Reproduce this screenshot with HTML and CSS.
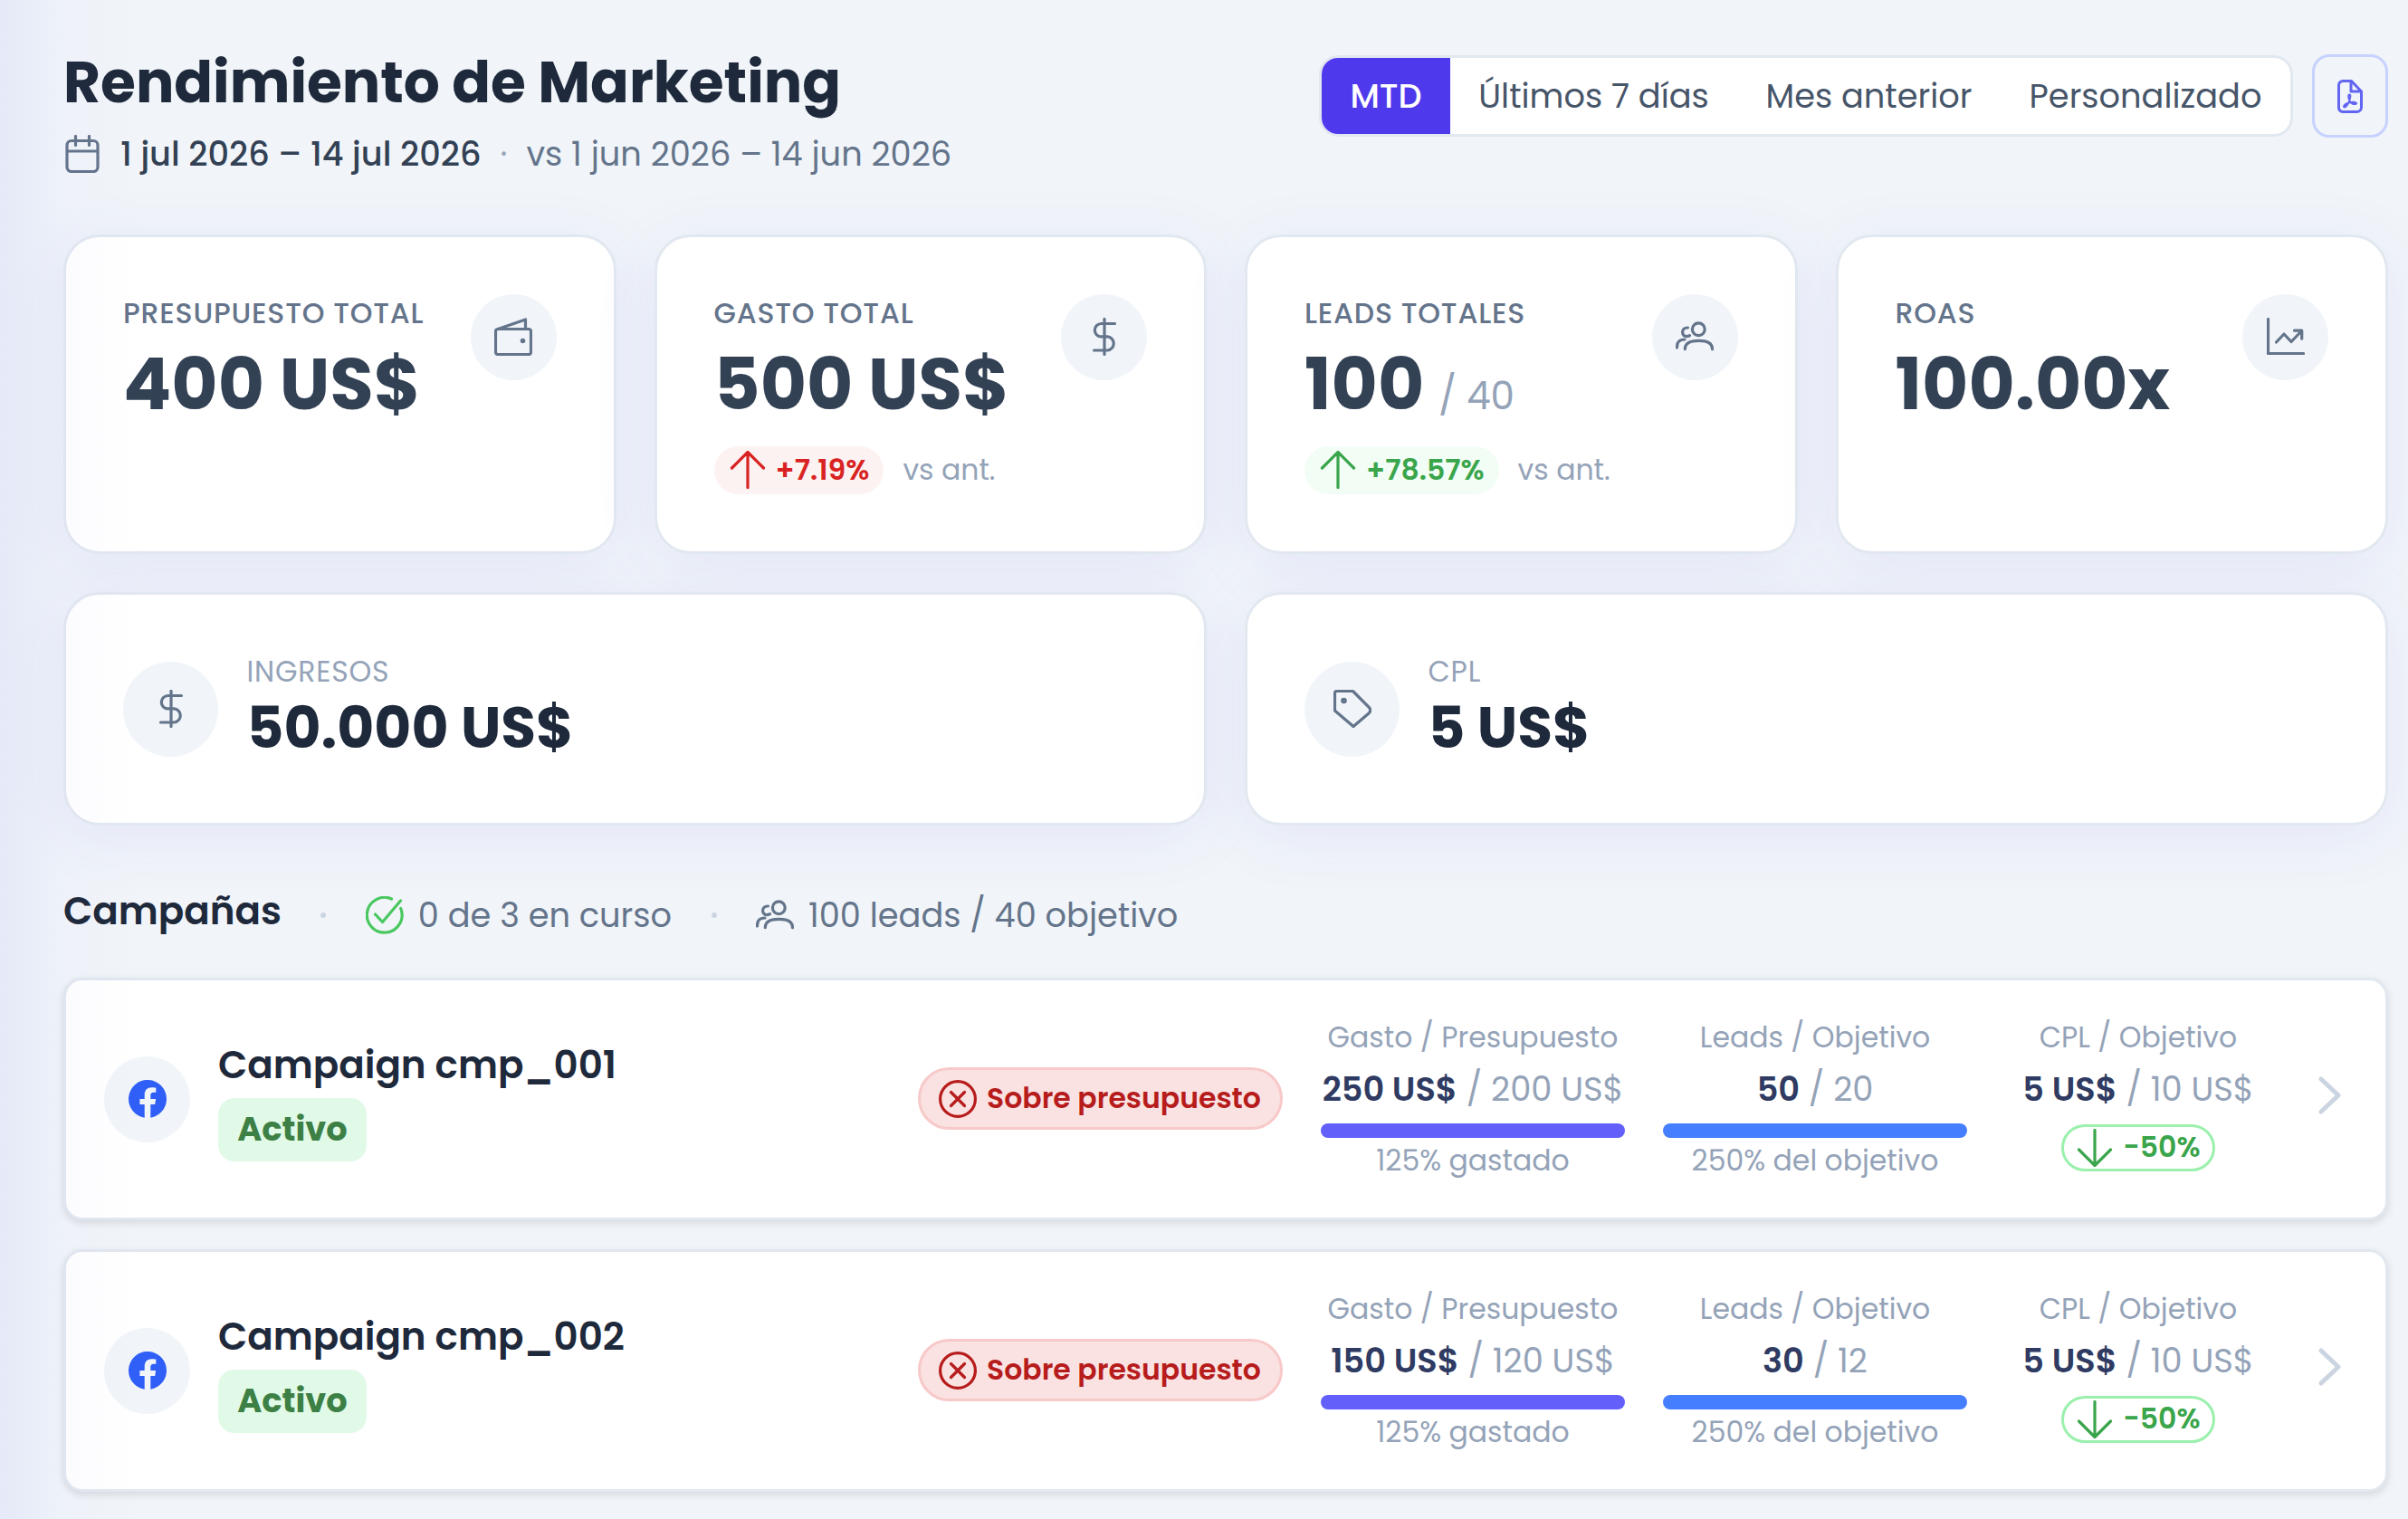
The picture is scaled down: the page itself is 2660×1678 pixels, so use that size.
FILE: index.html
```html
<!DOCTYPE html>
<html lang="es">
<head>
<meta charset="UTF-8">
<meta name="viewport" content="width=device-width, initial-scale=1.0">
<title>Rendimiento de Marketing</title>
<link rel="stylesheet" href="styles.css">
</head>
<body>
<!-- Icons -->
<svg class="sprite" aria-hidden="true">
    <symbol id="calendar" viewBox="0 0 42 42"><path d="M9 6.500h24a5 5 0 0 1 5 5v24a5 5 0 0 1-5 5H9a5 5 0 0 1-5-5v-24a5 5 0 0 1 5-5zM4 18h34M13.500 1.500v10M28.500 1.500v10"/></symbol>
    <symbol id="wallet" viewBox="0 0 42 42"><path d="M4 12.500h34a2.500 2.500 0 0 1 2.500 2.500v23a2.500 2.500 0 0 1-2.500 2.500H4A2.500 2.500 0 0 1 1.500 38V15A2.500 2.500 0 0 1 4 12.500zM4 12.500L34.500 2v10.500"/><circle class="dot-fill" cx="31.500" cy="25.500" r="2.800"/></symbol>
    <symbol id="dollar" viewBox="0 0 42 42"><path d="M21 1.400v39.200M32.500 6.500H17.500a7.200 7.200 0 0 0 0 14.400h7a7.600 7.600 0 0 1 0 15.100H9.500"/></symbol>
    <symbol id="users" viewBox="0 0 42 42"><circle cx="25.300" cy="12.700" r="6.900"/><path d="M10.300 34.700C10.300 27.500 17 25.400 25.500 25.400S40.500 27.500 40.500 34.700M1.500 33C1.300 27 4 24 10 24M13.500 11C6 10.500 5.800 20.500 12 20.700q2 0 3.500-1"/></symbol>
    <symbol id="chart" viewBox="0 0 42 42"><path d="M1.500 1.500v38h39M10.500 27l8.500-9 8 8.500L38.500 14.500M30.500 14.200h8.200v9"/></symbol>
    <symbol id="tag" viewBox="0 0 42 42"><path d="M3.500 1.500H21.500L39.300 19.300a4.500 4.500 0 0 1 0 6.400L22 40.500 1.500 23V3.500a2 2 0 0 1 2-2z"/><circle class="dot-fill" cx="11.500" cy="12" r="3.300"/></symbol>
    <symbol id="arrow-up" viewBox="0 0 42 42"><path d="M21 40.500V1.500M3.500 19L21 1.500 38.500 19"/></symbol>
    <symbol id="arrow-down" viewBox="0 0 42 42"><path d="M21 1.500v39M3.500 23L21 40.500 38.500 23"/></symbol>
    <symbol id="check" viewBox="0 0 42 42"><path d="M38.700 13.500A19.400 19.400 0 1 1 28.500 3M10.500 20l8 8.500L38.500 5"/></symbol>
    <symbol id="cross" viewBox="0 0 42 42"><circle cx="21" cy="21" r="19.400"/><path d="M13.500 13.500l15 15M28.500 13.500l-15 15"/></symbol>
    <symbol id="chevron" viewBox="0 0 42 42"><path d="M13 3l19 18-19 18"/></symbol>
    <symbol id="pdf" viewBox="0 0 28 37"><path d="M6 1.500h9.500L26.500 13v17.500a5 5 0 0 1-5 5H6a4.500 4.500 0 0 1-4.500-5V6A4.500 4.500 0 0 1 6 1.500zM15 2v11h11"/><path class="thin" d="M13.300 23c-1-2.500-1.800-6.500 0-6.500s1 4-.2 7c-1 2.800-3.500 7-5.300 7s-.5-3.500 4-4.800c3-1 7.500-1.200 9 0s-2 1.800-4.300.8-2.500-2-3.200-3.500z"/></symbol>
    <symbol id="facebook" viewBox="0 0 42 42"><path d="M42 21A21 21 0 1 0 17.700 41.700V27.100H12.400V21h5.300v-4.600c0-5.300 3.100-8.200 7.900-8.200 2.300 0 4.700.4 4.700.4v5.200h-2.600c-2.600 0-3.400 1.600-3.400 3.300V21h5.800l-.9 6.100h-4.900v14.600A21 21 0 0 0 42 21z"/></symbol>
</svg>

<div class="page">
    <header class="header">
        <div>
            <h1 class="title">Rendimiento de Marketing</h1>
            <div class="period">
                <svg class="icon"><use href="#calendar"/></svg>
                <span class="period-current">1 jul 2026 – 14 jul 2026</span>
                <span class="period-sep">·</span>
                <span class="period-previous">vs 1 jun 2026 – 14 jun 2026</span>
            </div>
        </div>
        <div class="toolbar">
            <div class="tabs">
                <button class="tab tab-active">MTD</button>
                <button class="tab tab-week">Últimos 7 días</button>
                <button class="tab tab-month">Mes anterior</button>
                <button class="tab tab-custom">Personalizado</button>
            </div>
            <button class="pdf-btn" aria-label="PDF"><svg><use href="#pdf"/></svg></button>
        </div>
    </header>

    <section class="kpis">
        <div class="card kpi">
            <div>
                <div class="kpi-label">PRESUPUESTO TOTAL</div>
                <div class="kpi-value">400 US$</div>
            </div>
            <div class="circle"><svg class="icon"><use href="#wallet"/></svg></div>
        </div>
        <div class="card kpi">
            <div>
                <div class="kpi-label">GASTO TOTAL</div>
                <div class="kpi-value">500 US$</div>
                <div class="trend">
                    <span class="trend-pill trend-bad"><svg class="icon"><use href="#arrow-up"/></svg>+7.19%</span>
                    <span class="trend-note">vs ant.</span>
                </div>
            </div>
            <div class="circle"><svg class="icon"><use href="#dollar"/></svg></div>
        </div>
        <div class="card kpi">
            <div>
                <div class="kpi-label">LEADS TOTALES</div>
                <div class="kpi-value">100 <span class="kpi-goal">/ 40</span></div>
                <div class="trend">
                    <span class="trend-pill trend-good"><svg class="icon"><use href="#arrow-up"/></svg>+78.57%</span>
                    <span class="trend-note">vs ant.</span>
                </div>
            </div>
            <div class="circle"><svg class="icon"><use href="#users"/></svg></div>
        </div>
        <div class="card kpi">
            <div>
                <div class="kpi-label">ROAS</div>
                <div class="kpi-value">100.00x</div>
            </div>
            <div class="circle"><svg class="icon"><use href="#chart"/></svg></div>
        </div>
    </section>

    <section class="totals">
        <div class="card total">
            <div class="circle circle-lg"><svg class="icon"><use href="#dollar"/></svg></div>
            <div class="total-text">
                <div class="total-label">INGRESOS</div>
                <div class="total-value">50.000 US$</div>
            </div>
        </div>
        <div class="card total">
            <div class="circle circle-lg"><svg class="icon"><use href="#tag"/></svg></div>
            <div class="total-text">
                <div class="total-label">CPL</div>
                <div class="total-value">5 US$</div>
            </div>
        </div>
    </section>

    <div class="section-head">
        <h2 class="section-title">Campañas</h2>
        <span class="bullet"></span>
        <span class="summary"><svg class="icon icon-ok"><use href="#check"/></svg>0 de 3 en curso</span>
        <span class="bullet"></span>
        <span class="summary"><svg class="icon"><use href="#users"/></svg>100 leads / 40 objetivo</span>
    </div>

    <section class="campaigns">
        <article class="campaign">
            <div class="circle"><svg class="icon-fb"><use href="#facebook"/></svg></div>
            <div class="campaign-info">
                <div class="campaign-name">Campaign cmp_001</div>
                <span class="status">Activo</span>
            </div>
            <span class="alert"><svg class="icon"><use href="#cross"/></svg>Sobre presupuesto</span>
            <div class="metric">
                <div class="metric-label">Gasto / Presupuesto</div>
                <div class="metric-value"><b>250 US$</b> / 200 US$</div>
                <div class="bar bar-spend"></div>
                <div class="metric-note">125% gastado</div>
            </div>
            <div class="metric">
                <div class="metric-label">Leads / Objetivo</div>
                <div class="metric-value"><b>50</b> / 20</div>
                <div class="bar bar-leads"></div>
                <div class="metric-note">250% del objetivo</div>
            </div>
            <div class="metric metric-cpl">
                <div class="metric-label">CPL / Objetivo</div>
                <div class="metric-value"><b>5 US$</b> / 10 US$</div>
                <span class="delta"><svg class="icon"><use href="#arrow-down"/></svg>-50%</span>
            </div>
            <svg class="icon chevron"><use href="#chevron"/></svg>
        </article>

        <article class="campaign">
            <div class="circle"><svg class="icon-fb"><use href="#facebook"/></svg></div>
            <div class="campaign-info">
                <div class="campaign-name">Campaign cmp_002</div>
                <span class="status">Activo</span>
            </div>
            <span class="alert"><svg class="icon"><use href="#cross"/></svg>Sobre presupuesto</span>
            <div class="metric">
                <div class="metric-label">Gasto / Presupuesto</div>
                <div class="metric-value"><b>150 US$</b> / 120 US$</div>
                <div class="bar bar-spend"></div>
                <div class="metric-note">125% gastado</div>
            </div>
            <div class="metric">
                <div class="metric-label">Leads / Objetivo</div>
                <div class="metric-value"><b>30</b> / 12</div>
                <div class="bar bar-leads"></div>
                <div class="metric-note">250% del objetivo</div>
            </div>
            <div class="metric metric-cpl">
                <div class="metric-label">CPL / Objetivo</div>
                <div class="metric-value"><b>5 US$</b> / 10 US$</div>
                <span class="delta"><svg class="icon"><use href="#arrow-down"/></svg>-50%</span>
            </div>
            <svg class="icon chevron"><use href="#chevron"/></svg>
        </article>
    </section>
</div>
</body>
</html>
```
FILE: styles.css
```css
* {
    box-sizing: border-box;
}

body {
    margin: 0;
    height: 100vh;
    overflow: hidden;
    background-color: #f1f5f9;
    color: #1e293b;
    font-family: Poppins, Inter, "Liberation Sans", sans-serif;
    font-size: 36.75px;
    white-space: nowrap;
}

body::after {
    content: "";
    position: absolute;
    top: 0;
    left: 0;
    width: 160px;
    height: 100%;
    background: linear-gradient(to right, rgba(99, 102, 241, 0.08), rgba(99, 102, 241, 0.02) 45%, rgba(99, 102, 241, 0));
    pointer-events: none;
}

h1, h2 {
    margin: 0;
}

button {
    font: inherit;
    border: none;
    padding: 0;
    background: none;
    cursor: pointer;
}

.sprite {
    display: none;
}

.icon {
    width: 42px;
    height: 42px;
    flex-shrink: 0;
    fill: none;
    stroke: currentColor;
    stroke-width: 3.2;
    stroke-linecap: round;
    stroke-linejoin: round;
}

.dot-fill {
    fill: currentColor;
    stroke: none;
}

.page {
    padding: 52px 22px 0 70px;
}

/* Header */
.header {
    display: flex;
    justify-content: space-between;
    align-items: flex-start;
    height: 207px;
}

.title {
    font-size: 63px;
    font-weight: 700;
    line-height: 78px;
}

.period {
    display: flex;
    align-items: center;
    height: 60px;
    margin-top: 10px;
    color: #64748b;
}

.period-current {
    margin-left: 21px;
    font-weight: 500;
    color: #334155;
}

.period-sep {
    width: 50px;
    text-align: center;
    color: #94a3b8;
}

.toolbar {
    display: flex;
    align-items: center;
    gap: 21px;
    margin-top: 8px;
}

.tabs {
    display: flex;
    height: 90px;
    border: 3px solid #e2e8f0;
    border-radius: 21px;
    background-color: #fff;
    overflow: hidden;
}

.tab {
    color: #475569;
}

.tab-active {
    width: 142px;
    background-color: #4f39ed;
    color: #fff;
    font-weight: 500;
}

.tab-week {
    width: 317px;
}

.tab-month {
    width: 291px;
}

.tab-custom {
    width: 320px;
}

.pdf-btn {
    display: flex;
    align-items: center;
    justify-content: center;
    width: 84px;
    height: 92px;
    border: 3px solid #c7d2fe;
    border-radius: 19px;
}

.pdf-btn svg {
    width: 28px;
    height: 37px;
    fill: none;
    stroke: #6366f1;
    stroke-width: 3;
    stroke-linejoin: round;
}

.thin {
    stroke-width: 2;
}

/* Cards */
.card {
    background-color: #fff;
    border: 3px solid #e2e8f0;
    border-radius: 40px;
    box-shadow: 0 12px 72px rgba(79, 70, 229, 0.08);
}

.circle {
    display: flex;
    align-items: center;
    justify-content: center;
    flex-shrink: 0;
    width: 95px;
    height: 95px;
    border-radius: 50%;
    background-color: #f1f5f9;
    color: #64748b;
}

.circle-lg {
    width: 105px;
    height: 105px;
}

.kpis {
    display: grid;
    grid-template-columns: repeat(4, 1fr);
    gap: 42px;
}

.kpi {
    display: flex;
    justify-content: space-between;
    height: 353px;
    padding: 63px;
}

.kpi .icon,
.total .icon {
    margin-bottom: 1px;
}

.kpi-label {
    font-size: 31.5px;
    font-weight: 500;
    line-height: 42px;
    letter-spacing: 0.8px;
    color: #64748b;
}

.kpi-value {
    height: 84px;
    margin-top: 16px;
    font-size: 78.75px;
    font-weight: 700;
    line-height: 84px;
    color: #334155;
}

.kpi-goal {
    margin-left: -1px;
    font-size: 42px;
    font-weight: 400;
    line-height: 1;
    color: #94a3b8;
}

.trend {
    display: flex;
    align-items: center;
    margin-top: 26px;
    font-size: 31.5px;
}

.trend-pill {
    display: flex;
    align-items: center;
    gap: 10px;
    height: 53px;
    padding: 0 16px;
    border-radius: 27px;
    font-weight: 600;
}

.trend-bad {
    background-color: #fdf2f2;
    color: #d92323;
}

.trend-good {
    background-color: #f2fdf5;
    color: #3aa54b;
}

.trend-note {
    margin-left: 21px;
    color: #94a3b8;
}

.totals {
    display: grid;
    grid-template-columns: repeat(2, 1fr);
    gap: 42px;
    margin-top: 42px;
}

.total {
    display: flex;
    align-items: center;
    height: 258px;
    padding: 0 63px;
}

.total-text {
    margin-left: 31.5px;
    padding-bottom: 1px;
}

.total-label {
    font-size: 31.5px;
    line-height: 42px;
    letter-spacing: 0.8px;
    color: #94a3b8;
}

.total-value {
    font-size: 63px;
    font-weight: 700;
    line-height: 82px;
}

/* Campaigns */
.section-head {
    display: flex;
    align-items: center;
    height: 60px;
    margin: 69px 0 39px;
    color: #64748b;
}

.section-title {
    padding-bottom: 10px;
    font-size: 42px;
    font-weight: 600;
    color: #1e293b;
}

.bullet {
    width: 6px;
    height: 6px;
    margin: 0 43.5px;
    border-radius: 50%;
    background-color: #cbd5e1;
}

.summary {
    display: flex;
    align-items: center;
    gap: 16px;
}

.icon-ok {
    color: #4ac760;
}

.campaigns {
    display: flex;
    flex-direction: column;
    gap: 32px;
}

.campaign {
    display: flex;
    align-items: center;
    gap: 42px;
    height: 268px;
    padding: 0 42px;
    background-color: #fff;
    border: 3px solid #e2e8f0;
    border-radius: 21px;
    box-shadow: 0 3px 8px rgba(0, 0, 0, 0.12);
}

.icon-fb {
    width: 42px;
    height: 42px;
    fill: #2f5ff6;
}

.campaign-info {
    flex-grow: 1;
    margin-left: -11px;
}

.campaign-name {
    padding-top: 1px;
    font-size: 42px;
    font-weight: 600;
    line-height: 62px;
}

.status {
    display: flex;
    align-items: center;
    justify-content: center;
    width: 164px;
    height: 70px;
    margin-top: 5px;
    padding-bottom: 2px;
    border-radius: 18px;
    background-color: #e1fae7;
    color: #3d8045;
    font-weight: 700;
}

.alert {
    display: flex;
    align-items: center;
    gap: 11px;
    width: 403px;
    height: 69px;
    margin-bottom: 1px;
    padding-left: 20px;
    border: 3px solid #f8c9c9;
    border-radius: 35px;
    background-color: #fae2e2;
    color: #b71c1c;
    font-size: 31.5px;
    font-weight: 600;
}

.metric {
    width: 336px;
    text-align: center;
    color: #94a3b8;
    font-size: 31.5px;
}

.metric-cpl {
    width: 294px;
}

.metric-label,
.metric-note {
    line-height: 42px;
}

.metric-label {
    margin-top: -1px;
}

.metric-value {
    margin-top: 9px;
    font-size: 36.75px;
    line-height: 55px;
}

.metric-value b {
    font-weight: 600;
    color: #2f3b62;
}

.bar {
    height: 16px;
    margin: 10px 0 4px;
    border-radius: 8px;
}

.bar-spend {
    background-color: #625ffb;
}

.bar-leads {
    background-color: #457fff;
}

.delta {
    display: flex;
    align-items: center;
    justify-content: center;
    gap: 10px;
    width: 170px;
    height: 52px;
    margin: 11px auto 9px;
    border: 3px solid #9af0ac;
    border-radius: 26px;
    color: #3aa54b;
    font-weight: 600;
}

.chevron {
    margin-bottom: 9px;
    color: #cbd5e1;
    stroke-width: 5;
}
```
